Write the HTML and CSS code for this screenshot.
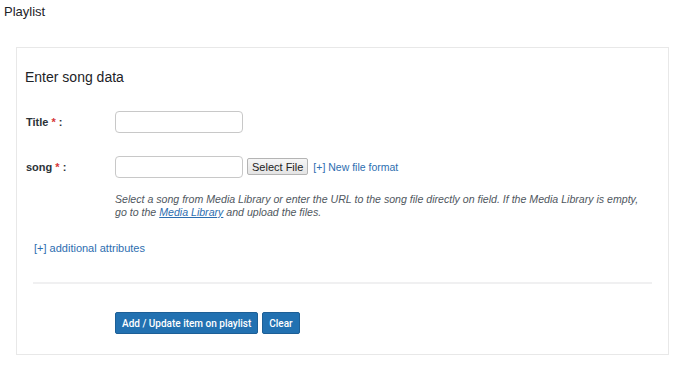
FILE: index.html
```html
<!DOCTYPE html>
<html>
<head>
    <meta charset="UTF-8">
    <title>Playlist</title>
    <link rel="stylesheet" href="styles.css">
</head>
<body>
    <h1 class="page-title">Playlist</h1>

    <div class="panel">
        <h2 class="panel-title">Enter song data</h2>

        <div class="field-row">
            <label class="field-label">Title <span class="req">*</span> :</label>
            <input type="text" class="text-input">
        </div>

        <div class="field-row song-row">
            <label class="field-label">song <span class="req">*</span> :</label>
            <input type="text" class="text-input">
            <button class="select-btn">Select File</button>
            <a href="#" class="link">[+] New file format</a>
        </div>

        <p class="description">
            Select a song from Media Library or enter the URL to the song file directly on field. If the Media Library is empty,<br>
            go to the <a href="#">Media Library</a> and upload the files.
        </p>

        <a href="#" class="link attrs-link">[+] additional attributes</a>

        <hr class="separator">

        <div class="actions">
            <button class="primary-btn">Add / Update item on playlist</button>
            <button class="primary-btn">Clear</button>
        </div>
    </div>
</body>
</html>
```

FILE: styles.css
```css
body {
    margin: 0;
    padding: 0;
    background-color: #fff;
    color: #1d2327;
    font-family: "Liberation Sans", Arial, sans-serif;
    font-size: 12px;
}
.page-title {
    margin: 0;
    padding: 4px 0 0 4px;
    font-size: 13px;
    line-height: 16px;
    font-weight: normal;
}
.panel {
    margin: 27px 0 0 16px;
    width: 643px;
    height: 306px;
    border: 1px solid #e8e8e8;
    padding: 0 0 0 8px;
    box-sizing: content-box;
}
.panel-title {
    margin: 19px 0 0 0;
    font-size: 14px;
    line-height: 20px;
    font-weight: normal;
}
.field-row {
    display: flex;
    align-items: center;
    margin-top: 24px;
    padding-left: 1px;
}
.song-row {
    margin-top: 23px;
}
.field-label {
    width: 89px;
    font-size: 11px;
    font-weight: bold;
    color: #2c3338;
}
.req {
    color: #d63638;
}
.text-input {
    width: 128px;
    height: 22px;
    box-sizing: border-box;
    border: 1px solid #c8c8c8;
    border-radius: 4px;
    margin: 0;
    padding: 0 6px;
}
.select-btn {
    margin: 2px 0 0 4px;
    height: 17px;
    padding: 0 4px;
    font-family: "Liberation Sans", Arial, sans-serif;
    font-size: 11px;
    color: #222;
    background: linear-gradient(#f6f6f6, #e4e4e4);
    border: 1px solid #b4b4b4;
    border-radius: 2px;
    align-self: flex-start;
}
.link {
    color: #2d6eb0;
    text-decoration: none;
    font-size: 11px;
    margin-left: 5px;
}
.song-row .link {
    font-size: 10.5px;
}
.description {
    margin: 15px 0 0 90px;
    font-size: 10.6px;
    line-height: 13px;
    font-style: italic;
    color: #50575e;
}
.description a {
    color: #2d6eb0;
}
.attrs-link {
    display: block;
    margin: 22px 0 0 9px;
    line-height: 14px;
}
.separator {
    margin: 27px 16px 0 8px;
    border: 0;
    height: 2px;
    background-color: #f0f0f1;
}
.actions {
    display: flex;
    gap: 4px;
    margin: 28px 0 0 90px;
}
.primary-btn {
    height: 22px;
    padding: 0 6px;
    font-family: Roboto, "Liberation Sans", Arial, sans-serif;
    font-size: 10px;
    font-weight: 500;
    color: #fff;
    background-color: #2271b1;
    border: 1px solid #1d5f96;
    border-radius: 2px;
}
```
